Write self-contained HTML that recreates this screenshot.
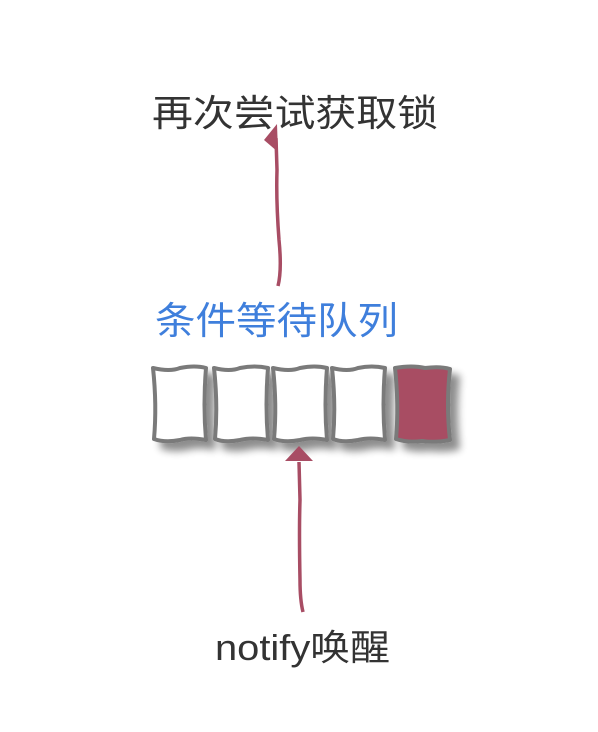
<!DOCTYPE html>
<html><head><meta charset="utf-8"><style>
html,body{margin:0;padding:0;background:#fff;width:598px;height:732px;overflow:hidden}
svg{display:block}
text{font-family:"Liberation Sans","Noto Sans CJK SC",sans-serif}
</style></head><body>
<svg width="598" height="732" viewBox="0 0 598 732" xmlns="http://www.w3.org/2000/svg">
<defs>
<filter id="sh" x="-20%" y="-20%" width="160%" height="160%">
<feGaussianBlur in="SourceAlpha" stdDeviation="4"/>
<feOffset dx="8" dy="8"/>
<feComponentTransfer><feFuncA type="linear" slope="0.45"/></feComponentTransfer>
<feMerge><feMergeNode/><feMergeNode in="SourceGraphic"/></feMerge>
</filter>
</defs>
<text x="152" y="126" font-size="37" fill="#333" textLength="286" lengthAdjust="spacingAndGlyphs">再次尝试获取锁</text>
<text x="155" y="334" font-size="38" fill="#3f7fdc" textLength="243" lengthAdjust="spacingAndGlyphs">条件等待队列</text>
<text x="215" y="660" font-size="36" fill="#333" textLength="175" lengthAdjust="spacingAndGlyphs">notify唤醒</text>
<!-- top arrow -->
<path d="M278 286 Q282 270 279 240 Q276 200 277 170 L276 138" stroke="#a84d64" stroke-width="3.5" fill="none"/>
<path d="M264 140 L277 124 L278 152 Z" fill="#a84d64"/>
<!-- boxes -->
<g filter="url(#sh)" stroke="#7a7a7a" stroke-width="4" stroke-linejoin="round">
<path d="M153 368 Q170 372 180 368 Q195 365 206 368 Q203 405 206 440 Q190 437 180 440 Q165 443 154 439 Q157 405 153 368Z" fill="#fff"/>
<path d="M214 368 Q230 372 240 368 Q255 365 268 368 Q265 405 268 440 Q252 437 240 440 Q225 443 215 439 Q218 405 214 368Z" fill="#fff"/>
<path d="M273 368 Q290 372 300 368 Q315 365 327 368 Q324 405 327 440 Q312 437 300 440 Q285 443 274 439 Q277 405 273 368Z" fill="#fff"/>
<path d="M332 368 Q348 372 358 368 Q372 365 385 368 Q382 405 385 440 Q370 437 358 440 Q343 443 333 439 Q336 405 332 368Z" fill="#fff"/>
<path d="M395 368 Q412 365 425 368 Q440 366 450 369 Q446 405 450 440 Q435 443 422 441 Q408 443 396 439 Q399 405 395 368Z" fill="#a84d64"/>
</g>
<!-- bottom arrow -->
<path d="M303 612 Q300 600 300 580 Q299 530 300 500 L299 462" stroke="#a84d64" stroke-width="3.5" fill="none"/>
<path d="M285 461 L299 446 L313 461 Z" fill="#a84d64"/>
</svg>
</body></html>
